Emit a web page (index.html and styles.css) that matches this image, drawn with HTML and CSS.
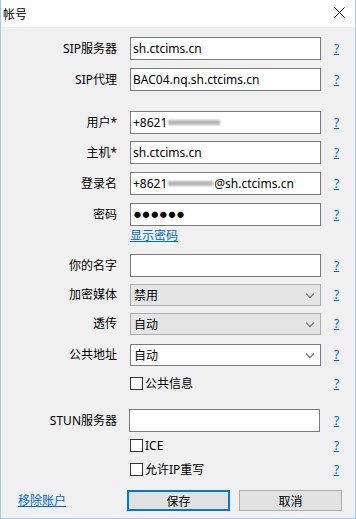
FILE: index.html
```html
<!DOCTYPE html>
<html lang="zh-CN">
<head>
    <meta charset="UTF-8">
    <title>帐号</title>
    <link rel="stylesheet" href="styles.css">
</head>
<body>
    <div class="window">
        <div class="titlebar">
            <span class="title">帐号</span>
            <span class="close">
                <svg width="11" height="11" viewBox="0 0 11 11"><path d="M0.5 0.5 L10.5 10.5 M10.5 0.5 L0.5 10.5" stroke="#000" stroke-width="1" fill="none"/></svg>
            </span>
        </div>

        <div class="form">
            <div class="row">
                <label class="label">SIP服务器</label>
                <div class="field"><div class="input">sh.ctcims.cn</div></div>
                <a class="help" href="#">?</a>
            </div>
            <div class="row mb-20">
                <label class="label">SIP代理</label>
                <div class="field"><div class="input">BAC04.nq.sh.ctcims.cn</div></div>
                <a class="help" href="#">?</a>
            </div>
            <div class="row mb-7">
                <label class="label">用户*</label>
                <div class="field"><div class="input">+8621<span class="blur"></span></div></div>
                <a class="help" href="#">?</a>
            </div>
            <div class="row">
                <label class="label">主机*</label>
                <div class="field"><div class="input">sh.ctcims.cn</div></div>
                <a class="help" href="#">?</a>
            </div>
            <div class="row">
                <label class="label">登录名</label>
                <div class="field"><div class="input">+8621<span class="blur short"></span>@sh.ctcims.cn</div></div>
                <a class="help" href="#">?</a>
            </div>
            <div class="row mb-3">
                <label class="label">密码</label>
                <div class="field"><div class="input dots">●●●●●●</div></div>
                <a class="help" href="#">?</a>
            </div>
            <div class="row link-row">
                <span class="label"></span>
                <a class="link" href="#">显示密码</a>
            </div>
            <div class="row mb-7">
                <label class="label">你的名字</label>
                <div class="field"><div class="input"></div></div>
                <a class="help" href="#">?</a>
            </div>
            <div class="row mb-7">
                <label class="label">加密媒体</label>
                <div class="field"><div class="select disabled">禁用<span class="arrow"></span></div></div>
                <a class="help" href="#">?</a>
            </div>
            <div class="row mb-9">
                <label class="label">透传</label>
                <div class="field"><div class="select disabled">自动<span class="arrow"></span></div></div>
                <a class="help" href="#">?</a>
            </div>
            <div class="row mb-11">
                <label class="label">公共地址</label>
                <div class="field"><div class="select">自动<span class="arrow"></span></div></div>
                <a class="help" href="#">?</a>
            </div>
            <div class="row check-row mb-19">
                <span class="label"></span>
                <div class="field"><span class="box"></span>公共信息</div>
                <a class="help" href="#">?</a>
            </div>
            <div class="row mb-7">
                <label class="label">STUN服务器</label>
                <div class="field"><div class="input stun"></div></div>
                <a class="help" href="#">?</a>
            </div>
            <div class="row check-row mb-11">
                <span class="label"></span>
                <div class="field"><span class="box"></span>ICE</div>
                <a class="help" href="#">?</a>
            </div>
            <div class="row check-row mb-14">
                <span class="label"></span>
                <div class="field"><span class="box"></span>允许IP重写</div>
                <a class="help" href="#">?</a>
            </div>
            <div class="actions">
                <a class="link remove" href="#">移除账户</a>
                <button class="btn primary">保存</button>
                <button class="btn">取消</button>
            </div>
        </div>
    </div>
</body>
</html>
```

FILE: styles.css
```css
* {
    box-sizing: border-box;
}

body {
    margin: 0;
    font-family: "Noto Sans", "Noto Sans CJK SC", sans-serif;
    font-size: 12px;
    color: #000;
}

.window {
    width: 356px;
    height: 519px;
    background: #f0f0f0;
    border: 1px solid #a3c8ee;
    border-top: none;
}

/* Title bar */
.titlebar {
    height: 27px;
    background: #fff;
    display: flex;
    align-items: center;
    justify-content: space-between;
    padding: 0 10px 0 2px;
}

.title {
    font-family: "Noto Sans CJK SC", sans-serif;
    font-size: 12px;
    line-height: 16px;
}

.close {
    display: flex;
    margin-top: -2px;
}

/* Form rows */
.form {
    padding-top: 10px;
}

.row {
    display: flex;
    align-items: center;
    margin-bottom: 8px;
}

.mb-3 { margin-bottom: 3px; }
.mb-7 { margin-bottom: 7px; }
.mb-9 { margin-bottom: 9px; }
.mb-11 { margin-bottom: 11px; }
.mb-14 { margin-bottom: 14px; }
.mb-19 { margin-bottom: 19px; }
.mb-20 { margin-bottom: 20px; }

.label {
    width: 116px;
    text-align: right;
    line-height: 16px;
    flex-shrink: 0;
}

.field {
    width: 191px;
    margin-left: 13px;
    display: flex;
    align-items: center;
    line-height: 16px;
}

.help {
    margin-left: 13px;
    color: #0066cc;
    text-decoration: underline;
    line-height: 16px;
}

.input {
    width: 191px;
    height: 23px;
    background: #fff;
    border: 1px solid #7a7a7a;
    padding: 0 2px;
    display: flex;
    align-items: center;
    white-space: nowrap;
}

.input.stun {
    margin-left: -1px;
}

.dots {
    font-size: 7px;
    letter-spacing: 1.6px;
    padding-left: 3px;
}

.blur {
    display: inline-block;
    width: 52px;
    height: 5px;
    background: #b4b4b4;
    filter: blur(1.2px);
    margin-left: 1px;
}

.blur.short {
    width: 45px;
    margin-right: 1px;
}

.select {
    width: 191px;
    height: 22px;
    background: #fff;
    border: 1px solid #7a7a7a;
    padding: 0 3px;
    display: flex;
    align-items: center;
    justify-content: space-between;
    font-family: "Noto Sans CJK SC", sans-serif;
}

.select.disabled {
    background: #e5e5e5;
    border-color: #adadad;
}

.arrow {
    width: 6px;
    height: 6px;
    border-right: 1px solid #606060;
    border-bottom: 1px solid #606060;
    transform: rotate(45deg);
    margin: -3px 4px 0 0;
}

.link {
    color: #0066cc;
    text-decoration: underline;
    line-height: 13px;
}

.link-row {
    height: 13px;
    margin-bottom: 12px;
}

.link-row .link {
    margin-left: 13px;
}

/* Checkboxes */
.check-row {
    height: 13px;
}

.check-row .field {
    height: 13px;
}

.box {
    width: 13px;
    height: 13px;
    border: 1px solid #333;
    background: #fff;
    margin-right: 2px;
    flex-shrink: 0;
}

/* Bottom buttons */
.actions {
    display: flex;
    align-items: center;
}

.remove {
    width: 109px;
    margin-left: 17px;
    line-height: 16px;
}

.btn {
    width: 103px;
    height: 21px;
    background: #e1e1e1;
    border: 1px solid #adadad;
    font-family: "Noto Sans CJK SC", sans-serif;
    font-size: 12px;
    color: #000;
    padding: 0;
    margin-right: 9px;
}

.btn.primary {
    border: 2px solid #0078d7;
}
```
